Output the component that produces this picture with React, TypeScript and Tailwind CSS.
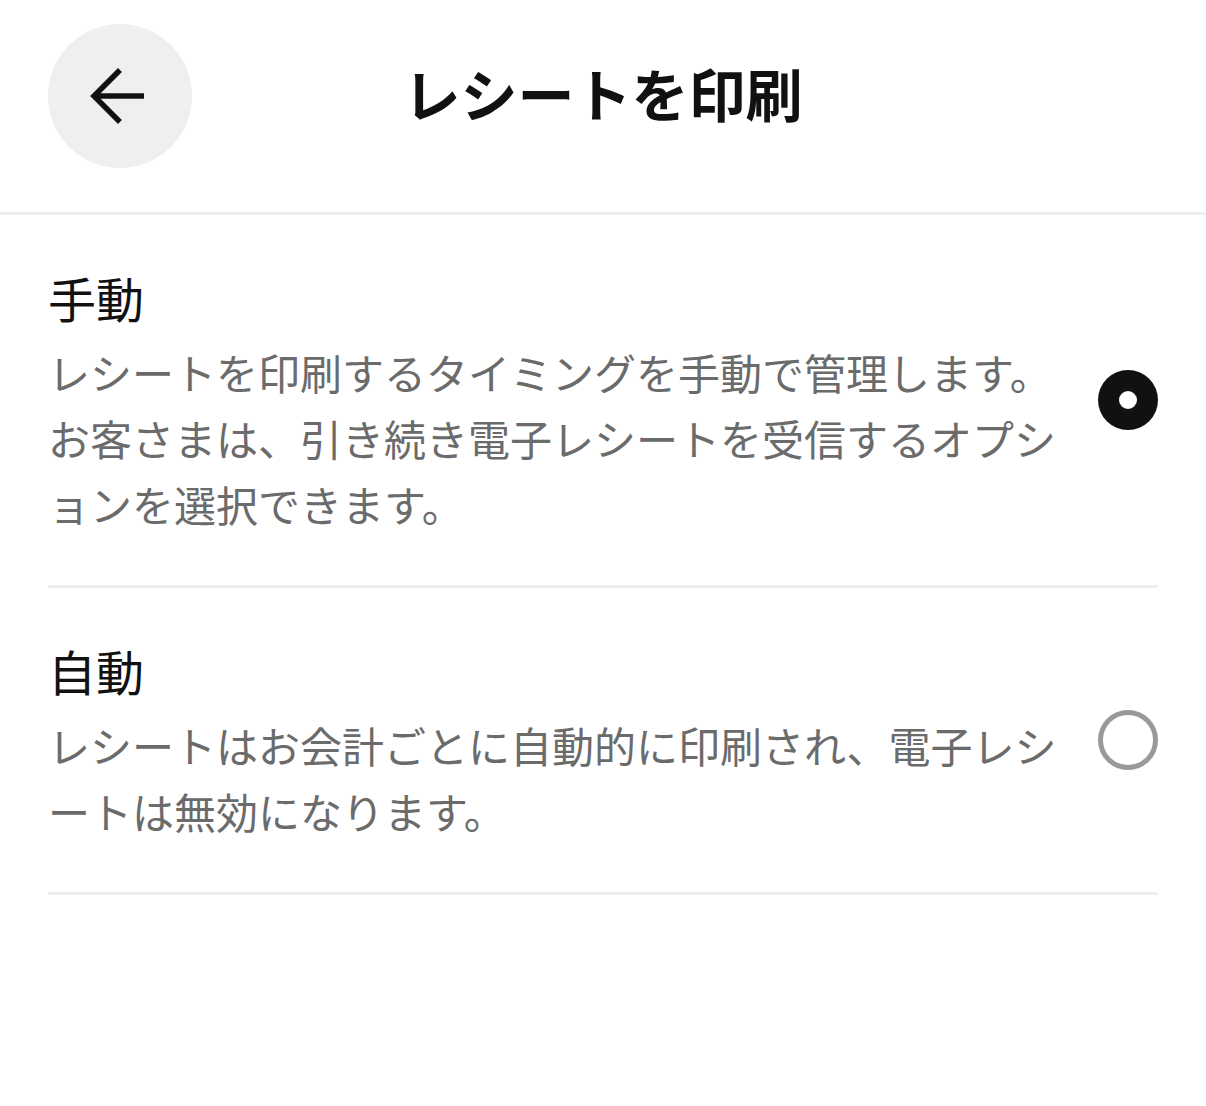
import React from "react";

function BackArrow() {
  return (
    <svg width="144" height="144" viewBox="0 0 144 144" fill="none">
      <path d="M70 48 L46 72 L70 96" stroke="#111111" strokeWidth="5.5" strokeLinecap="square" strokeLinejoin="miter" />
      <path d="M47 72 H96" stroke="#111111" strokeWidth="5.5" strokeLinecap="butt" />
    </svg>
  );
}

function Radio({ checked }: { checked: boolean }) {
  return checked ? (
    <div className="w-[60px] h-[60px] rounded-full bg-[#111111] flex items-center justify-center shrink-0">
      <div className="w-[18px] h-[18px] rounded-full bg-white" />
    </div>
  ) : (
    <div className="w-[60px] h-[60px] rounded-full border-[5px] border-[#999999] bg-white shrink-0" />
  );
}

function Option({ title, lines, checked }: { title: string; lines: string[]; checked: boolean }) {
  return (
    <div className="flex items-center border-b-[3px] border-[#eeeeee]">
      <div className="flex-1 pt-[52px] pb-[48px]">
        <div className="text-[48px] leading-[60px] font-normal text-[#111111]">{title}</div>
        <div className="mt-[12px] text-[42px] leading-[66px] text-[#6b6b6b]">
          {lines.map((l, i) => (
            <div key={i} className="whitespace-nowrap">{l}</div>
          ))}
        </div>
      </div>
      <Radio checked={checked} />
    </div>
  );
}

export default function App() {
  return (
    <div
      className="w-[1206px] h-[1106px] bg-white"
      style={{ fontFamily: '"Noto Sans CJK JP", "Noto Sans", sans-serif' }}
    >
      <div className="h-[215px] border-b-[3px] border-[#eeeeee] pt-[24px] px-[48px]">
        <div className="flex items-center">
          <button className="w-[144px] h-[144px] rounded-full bg-[#efefef] flex items-center justify-center">
            <BackArrow />
          </button>
          <div className="flex-1 text-center text-[57px] font-bold leading-[60px] mb-[8px] text-[#111111] pr-[144px]">
            レシートを印刷
          </div>
        </div>
      </div>
      <div className="px-[48px]">
        <Option
          title="手動"
          checked={true}
          lines={[
            "レシートを印刷するタイミングを手動で管理します。",
            "お客さまは、引き続き電子レシートを受信するオプシ",
            "ョンを選択できます。",
          ]}
        />
        <Option
          title="自動"
          checked={false}
          lines={[
            "レシートはお会計ごとに自動的に印刷され、電子レシ",
            "ートは無効になります。",
          ]}
        />
      </div>
    </div>
  );
}
